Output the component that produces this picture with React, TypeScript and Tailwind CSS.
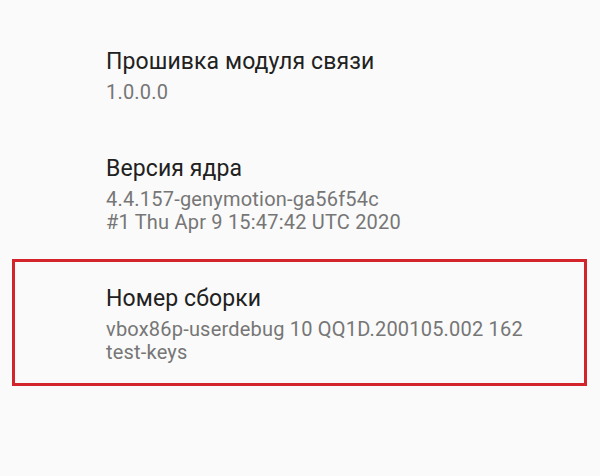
import React from "react";

type Item = { title: string; lines: string[]; highlight?: boolean };

const items: Item[] = [
  { title: "Прошивка модуля связи", lines: ["1.0.0.0"] },
  {
    title: "Версия ядра",
    lines: ["4.4.157-genymotion-ga56f54c", "#1 Thu Apr 9 15:47:42 UTC 2020"],
  },
  {
    title: "Номер сборки",
    lines: ["vbox86p-userdebug 10 QQ1D.200105.002 162", "test-keys"],
    highlight: true,
  },
];

export default function App() {
  return (
    <div
      className="w-[600px] h-[476px] overflow-hidden bg-[#fafafa] pt-[22px]"
      style={{ fontFamily: "Roboto, 'Noto Sans', sans-serif" }}
    >
      {items.map((it) => (
        <div key={it.title} className="relative py-[25px] pl-[106px] pr-4">
          <div className="text-[23px] leading-[30px] tracking-[0.1px] text-[#212121]">{it.title}</div>
          <div className="mt-[4px]">
            {it.lines.map((l) => (
              <div key={l} className="text-[20px] leading-[23px] tracking-[0.2px] text-[#767676]">
                {l}
              </div>
            ))}
          </div>
          {it.highlight && (
            <div className="absolute left-[12px] right-[13px] top-0 bottom-[3px] border-[3px] border-[#d3242c]" />
          )}
        </div>
      ))}
    </div>
  );
}
